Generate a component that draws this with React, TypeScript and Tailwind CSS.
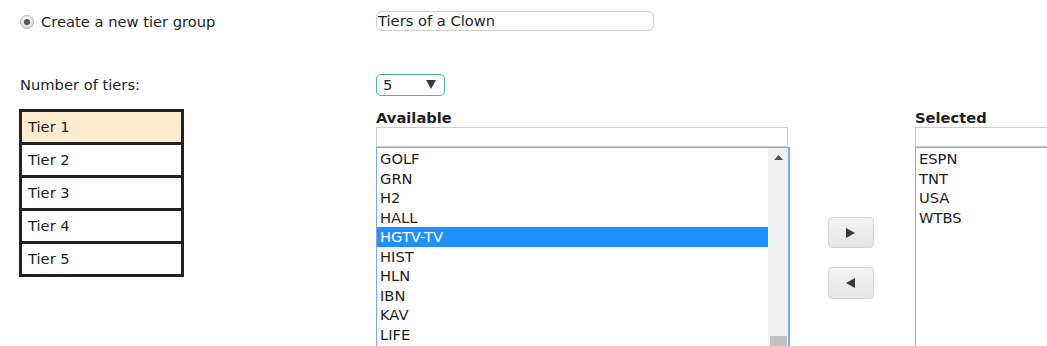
import React from 'react';

const available = ['GOLF', 'GRN', 'H2', 'HALL', 'HGTV-TV', 'HIST', 'HLN', 'IBN', 'KAV', 'LIFE'];
const selected = ['ESPN', 'TNT', 'USA', 'WTBS'];
const tiers = ['Tier 1', 'Tier 2', 'Tier 3', 'Tier 4', 'Tier 5'];

function Triangle({ dir }: { dir: 'up' | 'down' | 'left' | 'right' }) {
  const pts = {
    up: '0,8 5,0 10,8',
    down: '0,0 10,0 5,9',
    right: '0,0 9,5 0,10',
    left: '9,0 9,10 0,5',
  }[dir];
  return (
    <svg width="10" height="10" viewBox="0 0 10 10" className="block">
      <polygon points={pts} fill="#3a3a3a" />
    </svg>
  );
}

export default function App() {
  return (
    <div className="w-[1047px] h-[346px] overflow-hidden bg-white text-[#1e1e1e] text-[14.7px] font-['DejaVu_Sans',Verdana,sans-serif]">
      {/* Group name */}
      <div className="flex items-center h-[20px] mt-[11px]">
        <div className="w-[376px] pl-[20px] flex items-center gap-[7px]">
          <div className="w-[14px] h-[14px] mt-[2px] rounded-full border border-[#b4b4b4] bg-gradient-to-b from-[#f0f0f0] to-[#dcdcdc] flex items-center justify-center">
            <div className="w-[6px] h-[6px] rounded-full bg-[#555]" />
          </div>
          <span className="pt-[2px]">Create a new tier group</span>
        </div>
        <div className="w-[278px] h-[20px] border border-[#cfcfcf] rounded-[6px] pl-[1px] flex items-center leading-none">
          Tiers of a Clown
        </div>
      </div>

      {/* Number of tiers */}
      <div className="flex items-center h-[22px] mt-[43px]">
        <div className="w-[376px] pl-[20px]">Number of tiers:</div>
        <div className="w-[69px] h-[22px] border border-[#45b5aa] rounded-[5px] flex items-center justify-between pl-[6px] pr-[8px]">
          <span>5</span>
          <Triangle dir="down" />
        </div>
      </div>

      {/* Tiers and lists */}
      <div className="flex mt-[13px]">
        <div className="w-[376px] pl-[19px]">
          <div className="w-[165px] border-[3px] border-[#222] divide-y-[3px] divide-[#222]">
            {tiers.map((t, i) => (
              <div key={t} className={`h-[33px] last:h-[30px] flex items-center pl-[6px] pt-[1px] ${i === 0 ? 'bg-[#ffebcd]' : 'bg-white'}`}>
                {t}
              </div>
            ))}
          </div>
        </div>

        {/* Available */}
        <div className="w-[414px]">
          <div className="h-[18px] leading-[18px] font-bold">Available</div>
          <div className="w-[412px] h-[20px] border border-[#cccccc]" />
          <div className="h-[230px] border border-[#7ea8ee] border-r-2 flex">
            <div className="flex-1 pt-[1px] leading-[19.5px]">
              {available.map((a) => (
                <div key={a} className={`h-[19.5px] pl-[3px] ${a === 'HGTV-TV' ? 'bg-[#1e90ff] text-white' : ''}`}>
                  {a}
                </div>
              ))}
            </div>
            <div className="w-[20px] bg-[#f0f0f0] flex flex-col items-center">
              <div className="h-[17px] pt-[7px]">
                <svg width="9" height="5" viewBox="0 0 9 5" className="block">
                  <polygon points="0,5 4.5,0 9,5" fill="#505050" />
                </svg>
              </div>
              <div className="h-[172px]" />
              <div className="w-[17px] h-[40px] bg-[#c1c1c1]" />
            </div>
          </div>
        </div>

        {/* Move buttons */}
        <div className="ml-[38px] w-[46px] pt-[108px] flex flex-col gap-[19px]">
          <div className="h-[31px] rounded-[4px] border border-[#d6d6d6] bg-gradient-to-b from-[#f4f4f4] to-[#e4e4e4] flex items-center justify-center">
            <Triangle dir="right" />
          </div>
          <div className="h-[32px] rounded-[4px] border border-[#d6d6d6] bg-gradient-to-b from-[#f4f4f4] to-[#e4e4e4] flex items-center justify-center">
            <Triangle dir="left" />
          </div>
        </div>

        {/* Selected */}
        <div className="ml-[41px] flex-1">
          <div className="h-[18px] leading-[18px] font-bold">Selected</div>
          <div className="h-[20px] border border-[#cccccc] border-r-0" />
          <div className="h-[230px] border border-[#a9a9a9] border-r-0 pt-[1px] pl-[3px] leading-[19.5px]">
            {selected.map((s) => (
              <div key={s} className="h-[19.5px]">
                {s}
              </div>
            ))}
          </div>
        </div>
      </div>
    </div>
  );
}
